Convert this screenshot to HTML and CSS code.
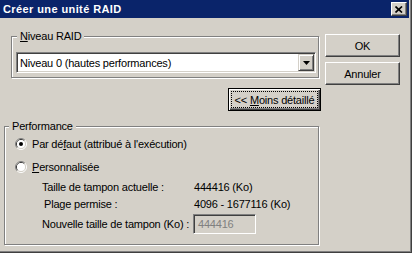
FILE: index.html
```html
<!DOCTYPE html>
<html lang="fr">
<head>
    <meta charset="UTF-8">
    <title>Créer une unité RAID</title>
    <link rel="stylesheet" href="styles.css">
</head>
<body>
    <div class="window">
        <div class="titlebar">
            <span class="title">Créer une unité RAID</span>
            <button class="close-btn">
                <svg width="8" height="7" viewBox="0 0 8 7"><path d="M0.5,0.5 L7,6.5 M7,0.5 L0.5,6.5" stroke="#000" stroke-width="1.7" fill="none"/></svg>
            </button>
        </div>
        <div class="dialog">
            <div class="main">
                <fieldset class="group group-raid">
                    <legend><u>N</u>iveau RAID</legend>
                    <div class="combo">
                        <span class="combo-text">Niveau 0 (hautes performances)</span>
                        <span class="combo-btn">
                            <svg width="7" height="4" viewBox="0 0 7 4"><polygon points="0,0 7,0 3.5,4" fill="#000"/></svg>
                        </span>
                    </div>
                </fieldset>

                <button class="btn btn-default"><span class="focus"><span>&lt;&lt; <u>M</u>oins détaillé</span></span></button>

                <fieldset class="group group-perf">
                    <legend>Performance</legend>
                    <label class="radio">
                        <svg width="12" height="12" viewBox="0 0 12 12">
                            <path d="M2.11,9.89 A5.5,5.5 0 0 1 9.89,2.11" stroke="#808080" fill="none"/>
                            <path d="M9.89,2.11 A5.5,5.5 0 0 1 2.11,9.89" stroke="#fff" fill="none"/>
                            <path d="M2.82,9.18 A4.5,4.5 0 0 1 9.18,2.82" stroke="#404040" fill="none"/>
                            <path d="M9.18,2.82 A4.5,4.5 0 0 1 2.82,9.18" stroke="#d4d0c8" fill="none"/>
                            <circle cx="6" cy="6" r="4" fill="#fff"/>
                            <circle cx="6" cy="6" r="2" fill="#000"/>
                        </svg>
                        <span>Par dé<u>f</u>aut (attribué à l'exécution)</span>
                    </label>
                    <label class="radio">
                        <svg width="12" height="12" viewBox="0 0 12 12">
                            <path d="M2.11,9.89 A5.5,5.5 0 0 1 9.89,2.11" stroke="#808080" fill="none"/>
                            <path d="M9.89,2.11 A5.5,5.5 0 0 1 2.11,9.89" stroke="#fff" fill="none"/>
                            <path d="M2.82,9.18 A4.5,4.5 0 0 1 9.18,2.82" stroke="#404040" fill="none"/>
                            <path d="M9.18,2.82 A4.5,4.5 0 0 1 2.82,9.18" stroke="#d4d0c8" fill="none"/>
                            <circle cx="6" cy="6" r="4" fill="#fff"/>
                        </svg>
                        <span><u>P</u>ersonnalisée</span>
                    </label>

                    <div class="info">
                        <span>Taille de tampon actuelle :</span>
                        <span>444416 (Ko)</span>
                        <span class="indent">Plage permise :</span>
                        <span>4096 - 1677116 (Ko)</span>
                        <span>Nouvelle taille de tampon (Ko) :</span>
                        <span class="edit">444416</span>
                    </div>
                </fieldset>
            </div>

            <div class="side">
                <button class="btn">OK</button>
                <button class="btn">Annuler</button>
            </div>
        </div>
    </div>
</body>
</html>
```

FILE: styles.css
```css
body {
    margin: 0;
    font-family: "Liberation Sans", Arial, sans-serif;
    font-size: 11px;
    letter-spacing: -0.2px;
    color: #000;
}

.window {
    width: 412px;
    height: 253px;
    box-sizing: border-box;
    background: #d4d0c8;
    border-right: 1px solid #404040;
    border-bottom: 1px solid #404040;
    box-shadow: inset -1px -1px 0 #808080;
    padding-right: 2px;
    overflow: hidden;
}

.titlebar {
    height: 18px;
    background: #0a246a;
    display: flex;
    align-items: center;
    justify-content: space-between;
    padding: 0 2px 0 3px;
}

.title {
    color: #fff;
    font-weight: bold;
    letter-spacing: 0.4px;
}

.close-btn {
    width: 16px;
    height: 14px;
    padding: 0;
    box-sizing: border-box;
    background: #d4d0c8;
    border: 1px solid;
    border-color: #fff #404040 #404040 #fff;
    box-shadow: inset -1px -1px 0 #808080;
    display: flex;
    align-items: center;
    justify-content: center;
}

.dialog {
    display: flex;
    gap: 4px;
    padding-left: 4px;
}

.main {
    width: 317px;
    display: flex;
    flex-direction: column;
}

.side {
    width: 75px;
    display: flex;
    flex-direction: column;
    gap: 5px;
    padding-top: 16px;
}

/* etched group box */
.group {
    margin: 0;
    min-width: 0;
    box-sizing: border-box;
    border: 1px solid #808080;
    box-shadow: inset 1px 1px 0 #fff, 1px 1px 0 #fff;
}

.group legend {
    padding: 0 3px;
    line-height: 13px;
    background: #d4d0c8;
}

.group-raid {
    width: 308px;
    margin: 12px 0 0 7px;
    padding: 9px 2px 4px 4px;
}

.group-raid legend {
    margin-left: 1px;
}

.group-perf {
    width: 315px;
    margin-top: 9px;
    padding: 4px 4px 10px 10px;
}

.group-perf legend {
    margin-left: -6px;
}

.combo {
    height: 21px;
    box-sizing: border-box;
    background: #fff;
    border: 1px solid;
    border-color: #808080 #fff #fff #808080;
    box-shadow: inset 1px 1px 0 #404040, inset -1px -1px 0 #d4d0c8;
    padding: 1px;
    display: flex;
    align-items: center;
}

.combo-text {
    padding-left: 2px;
}

.combo-btn {
    margin-left: auto;
    width: 16px;
    height: 17px;
    box-sizing: border-box;
    background: #d4d0c8;
    border: 1px solid;
    border-color: #d4d0c8 #404040 #404040 #d4d0c8;
    box-shadow: inset 1px 1px 0 #fff, inset -1px -1px 0 #808080;
    display: flex;
    align-items: center;
    justify-content: center;
}

.btn {
    font: inherit;
    letter-spacing: inherit;
    color: #000;
    height: 23px;
    padding: 0;
    box-sizing: border-box;
    background: #d4d0c8;
    border: 1px solid;
    border-color: #fff #404040 #404040 #fff;
    box-shadow: inset -1px -1px 0 #808080, inset 1px 1px 0 #d4d0c8;
}

.btn-default {
    align-self: flex-end;
    width: 93px;
    margin-top: 10px;
    padding: 2px;
    border-color: #000;
    box-shadow: inset 1px 1px 0 #fff, inset -1px -1px 0 #404040, inset -2px -2px 0 #808080;
    display: flex;
}

.focus {
    flex: 1;
    border: 1px dotted #000;
    display: flex;
    align-items: center;
    justify-content: center;
    white-space: nowrap;
}

.radio {
    display: flex;
    align-items: center;
    gap: 5px;
    height: 13px;
    margin-bottom: 10px;
}

.info {
    display: grid;
    grid-template-columns: 152px auto;
    grid-template-rows: 13px 13px 20px;
    row-gap: 4px;
    align-items: center;
    margin: -3px 0 0 27px;
    white-space: nowrap;
}

.indent {
    padding-left: 2px;
}

.edit {
    width: 63px;
    height: 20px;
    margin-left: -1px;
    box-sizing: border-box;
    border: 1px solid;
    border-color: #808080 #fff #fff #808080;
    box-shadow: inset 1px 1px 0 #404040, inset -1px -1px 0 #d4d0c8;
    color: #808080;
    padding-left: 4px;
    display: flex;
    align-items: center;
}
```
